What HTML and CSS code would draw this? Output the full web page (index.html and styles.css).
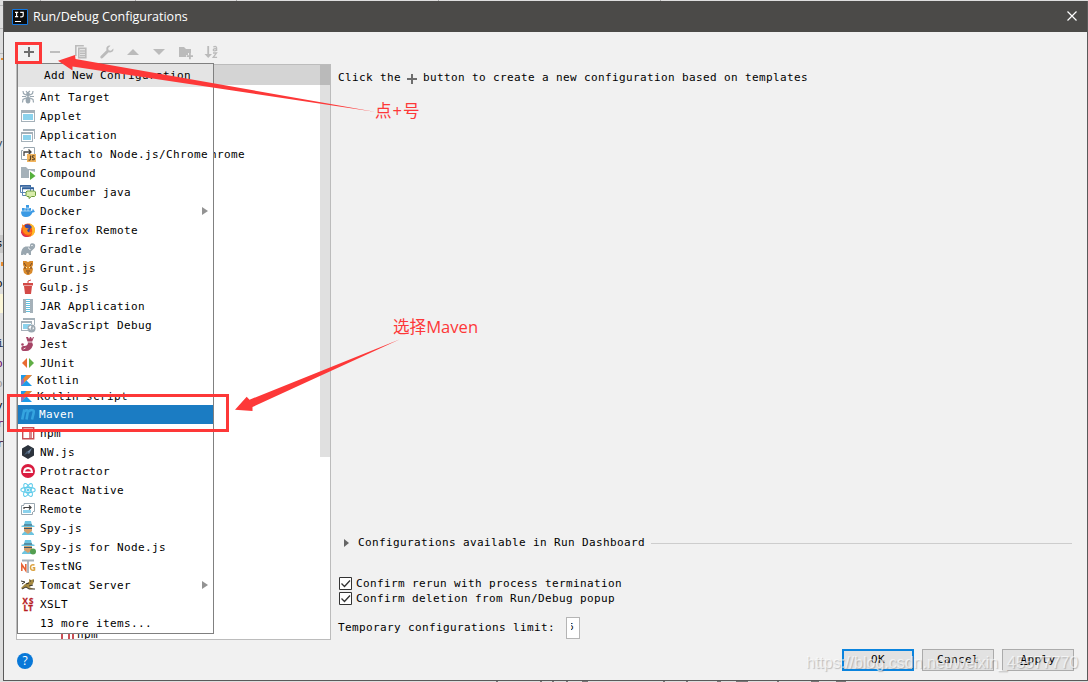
FILE: index.html
```html
<!DOCTYPE html>
<html lang="en">
<head>
<meta charset="utf-8">
<title>Run/Debug Configurations</title>
<link rel="stylesheet" href="styles.css">
</head>
<body>
<div class="screen">
  <!-- editor visible around the dialog -->
  <svg class="editor" width="1088" height="682" viewBox="0 0 1088 682">
    <path fill="#b9b9b9" d="M0 5h3v1H0zM0 28h3v1H0zM0 53h3v1H0z"/>
    <path fill="#a5a5a5" d="M40 0h1v1h-1zM135 0h1v1h-1zM236 0h1v1h-1zM438 0h1v1h-1zM660 0h1v1h-1z"/>
    <path fill="#c8c8c8" d="M0 235h3v18H0z"/>
    <path fill="#fbf6d8" d="M0 294h3v19H0z"/>
    <path fill="#777" d="M496 681h2v1h-2zM540 681h2v1h-2zM552 681h2v1h-2zM566 681h2v1h-2zM582 681h6v1h-6zM663 681h2v1h-2zM686 681h2v1h-2zM717 681h4v1h-4zM736 681h12v1h-12zM777 681h2v1h-2zM811 681h8v1h-8zM836 681h10v1h-10z"/>
    <g class="code">
      <text x="-4" y="147" fill="#345">y</text><text x="-4" y="247">s</text><text x="-4" y="287">o</text>
      <text x="-3" y="347" fill="#235">i</text><text x="-4" y="367" fill="#606">b</text><text x="-4" y="387" fill="#999">o</text>
      <text x="-4" y="409">y</text><text x="-3" y="427" fill="#606">r</text><text x="-3" y="447" fill="#303">r</text>
    </g>
    <path fill="#e78b2e" d="M1 262h2v4H1zM1 58h2v2H1z"/>
  </svg>

  <div class="dialog">
    <header class="titlebar">
      <svg width="16" height="16" viewBox="0 0 16 16"><path fill="#0b0b0b" stroke="#1478e0" d="M.5.5h15v15H.5z"/><path fill="none" stroke="#fff" stroke-width="1.2" d="M3 3.300h3.200M4.600 3.300v4.400M3 7.700h3.200M8.200 3.300h3v3.200q0 1.300-1.600 1.300H8.200M3 12.500h6"/></svg>
      <h1 class="title">Run/Debug Configurations</h1>
      <svg class="close" width="10" height="10" viewBox="0 0 10 10"><path stroke="#fff" stroke-width="1.2" d="m.5.5 9 9m0-9-9 9"/></svg>
    </header>

    <main class="content">
      <section class="left">
        <div class="toolbar">
          <svg viewBox="0 0 16 16"><path stroke="#6e6e6e" stroke-width="2" d="M3 8h10M8 3v10"/></svg>
          <svg viewBox="0 0 16 16"><path stroke="#bdbdbd" stroke-width="2" d="M3 8h10"/></svg>
          <svg viewBox="0 0 16 16"><path fill="none" stroke="#bbb" stroke-width="1.6" d="M2.800 12V1.800h8M5.800 4.400h7v9.400h-7zM7 7h5M7 9.300h5M7 11.600h5"/></svg>
          <svg viewBox="0 0 16 16"><path fill="#bbb" d="M14.300 4.500 12 6.800 9.600 6.200 9.200 4 11.500 1.700C9.600.9 7.200 2.300 7.300 4.900l.2 1.300L1.500 12.200q-.6 1.200.3 2t2-.1l5.900-5.900c3 .9 5.400-1.100 4.600-3.700Z"/></svg>
          <svg viewBox="0 0 16 16"><path fill="#bbb" d="M2 11 8 5l6 6z"/></svg>
          <svg viewBox="0 0 16 16"><path fill="#bbb" d="M2 5l6 6 6-6z"/></svg>
          <svg viewBox="0 0 16 16"><path fill="#bbb" d="M2 3h5l2 2h5v4h-3v2H9v2H2zM12 9h1.800v2.200H16V13h-2.200v2.200H12V13H9.700v-1.800H12z"/></svg>
          <svg viewBox="0 0 16 16"><path fill="#bbb" d="M4.300 2h1.800v8H9l-3.800 4L1.500 10h2.800z"/><path fill="none" stroke="#bbb" stroke-width="1.300" d="M10.300 2.800q3.300-.9 3.300 1v3.100m0-2.200q-3.300-.2-3.300 1.200c0 1.600 3 1 3.300-.4M10 9h3.500l-3.300 4.300h3.900"/></svg>
        </div>
        <div class="tree">
          <div class="tree-selected"></div>
          <span class="tree-chrome">Chrome</span>
          <span class="tree-npm"><svg width="13" height="13" viewBox="0 0 13 13"><path fill="#fff" stroke="#c94f55" stroke-width="2" d="M1 1h11v11H1zM8 4v8"/></svg>npm</span>
          <div class="scrollbar"></div>
        </div>
      </section>

      <section class="right">
        <p class="hint"><span>Click the</span><svg width="10" height="10" viewBox="0 0 10 10"><path stroke="#6e6e6e" stroke-width="2" d="M0 5h10M5 0v10"/></svg><span>button to create a new configuration based on templates</span></p>
        <div class="dashboard"><svg width="6" height="8" viewBox="0 0 6 8"><path fill="#666" d="M0 0v8l5-4z"/></svg><span>Configurations available in Run Dashboard</span><i></i></div>
        <div class="check"><svg width="13" height="13" viewBox="0 0 13 13"><path fill="#fff" stroke="#333" d="M.5.5h12v12H.5z"/><path fill="none" stroke="#333" stroke-width="1.300" d="m2.500 6.500 3 3 5.500-6"/></svg>Confirm rerun with process termination</div>
        <div class="check"><svg width="13" height="13" viewBox="0 0 13 13"><path fill="#fff" stroke="#333" d="M.5.5h12v12H.5z"/><path fill="none" stroke="#333" stroke-width="1.300" d="m2.500 6.500 3 3 5.500-6"/></svg>Confirm deletion from Run/Debug popup</div>
        <div class="limit">Temporary configurations limit:<span class="field"><span>5</span></span></div>
      </section>
    </main>

    <footer class="footer">
      <span class="help">?</span>
      <div class="buttons"><span class="button primary">OK</span><span class="button">Cancel</span><span class="button"><u>A</u>pply</span></div>
    </footer>
  </div>

  <div class="popup">
    <div class="popup-title">Add New Configuration</div>
    <div class="item"><svg viewBox="0 0 14 14"><path fill="none" stroke="#9aa7b0" stroke-width="1.200" d="M5 5 2.500 3.500 2 1M9 5l2.500-1.500L12 1M5 6.500H1M9 6.500h4M5 8l-3 1.500-.5 3M9 8l3 1.500.5 3M5 1l1.500 2L9 1"/><ellipse cx="7" cy="4.500" rx="2" ry="2.300" fill="#9aa7b0"/><ellipse cx="7" cy="10" rx="2.400" ry="3.500" fill="#9aa7b0"/></svg>Ant Target</div>
    <div class="item"><svg viewBox="0 0 14 14"><path fill="#a5b1b9" d="M0 1h14v12H0z"/><path fill="#fff" d="M1 4h12v8H1z"/><path fill="#8bd2ec" d="M2 5h10v6H2z"/></svg>Applet</div>
    <div class="item"><svg viewBox="0 0 14 14"><path fill="#a5b1b9" d="M2 1h12v10h-1V3H2zM0 4h12v10H0z"/><path fill="#fff" d="M1 6h10v7H1z"/><path fill="#8bd2ec" d="M2 7h8v5H2z"/></svg>Application</div>
    <div class="item"><svg viewBox="0 0 14 14"><path fill="none" stroke="#9aa7b0" d="M3 2V.5h10.500V7M2 3.500H.5v9H6"/><path fill="none" stroke="#444" stroke-width="1.300" d="M3 9V5h7M7.500 2.500 10 5 7.500 7.500"/><path fill="#f2b55e" d="M6 7h9v8H6z"/><path fill="none" stroke="#5c4526" stroke-width="1.100" d="M9.500 8.500v3.700q0 1.300-2 .8M13.500 8.900q-2.300-.5-2.300.9c0 1 2.300.7 2.300 2q0 1.500-2.600.8"/></svg>Attach to Node.js/Chrome</div>
    <div class="item"><svg viewBox="0 0 14 14"><path fill="#a5b1b9" d="M0 1h5l2 2h7v3L8 4v8H0z"/><path fill="#55b03c" d="M9 5.500 14.500 10 9 14z"/></svg>Compound</div>
    <div class="item"><svg class="wide" viewBox="0 0 16 14"><path fill="#fff" stroke="#5b86b5" d="M.5.500h10v7H.5zM2.500 2.500h11v8h-11z"/><path stroke="#315f9a" stroke-width="1.600" d="M0 1h11M2 3.500h12"/><path fill="#d9edac" stroke="#6d9c3c" d="M7 6h7.500l1 1v3.500l-1 1h-3L9 13.500v-2H7l-1-1V7z"/></svg>Cucumber java</div>
    <div class="item"><svg viewBox="0 0 14 14"><path fill="#3b9ae4" d="M5 1h3v3h2v3q2 0 1.700-2.300 1.300.8 1.300 2l1 .2q-.6 1.600-2.500 1.600-2 4.500-6.500 4.500Q0 13 0 7.500h1V4h4z"/><path stroke="#fff" stroke-width=".5" d="M1 7h9M4 4h5M4 4v3M7 4v3"/></svg>Docker<b></b></div>
    <div class="item"><svg viewBox="0 0 14 14"><circle cx="7" cy="7.200" r="6.800" fill="#f4511e"/><path fill="#ffbd27" d="M8 0q6 2 6 7t-5 6.500q3-3 2-7Q10 2 8 0"/><path fill="#3b4ba3" d="M4 2q4-2 7 2l-2 2-1 4-4-2z"/><path fill="#ff8c1a" d="m1 1 4 4 3 .5L6 7l1 2q2 1 4-.5-1 4-5 3Q1 11 1 1"/><path fill="#d72a58" d="M0 7q2 6 8 6.500-6 2-8-4z"/></svg>Firefox Remote</div>
    <div class="item"><svg viewBox="0 0 14 14"><path fill="#9aa7b0" d="M0 13q0-7.500 4.500-8.500l4.500 0q-.5-3 2-3.200Q14.200 1 14.200 4q0 2.500-2.700 4L10 9.500V13H8q0-2-1.500-2T5 13H3.500Q3 11.500 2 13z"/><path fill="none" stroke="#fff" stroke-width=".8" d="M10 3.700q1.800-.7 2.200.5M7.500 5.500q0 2 2 2"/></svg>Gradle</div>
    <div class="item"><svg viewBox="0 0 14 14"><path fill="#d98a2b" d="M2 0h3l2 1 2-1h3v4l-1 2 1 2-1 4-3 2H6l-3-2-1-4 1-2-1-2z"/><path fill="none" stroke="#68432c" stroke-width=".9" d="M3 2l2 3M11 2 9 5M3 7h2M9 7h2M5 10h4M6 12h2"/><path fill="#fff0b0" d="M5 6h1v1H5zM8 6h1v1H8z"/></svg>Grunt.js</div>
    <div class="item"><svg viewBox="0 0 14 14"><path fill="none" stroke="#d34a47" d="M7 4V1l3-1"/><path fill="#d34a47" d="M2 3h10v2.500H2zM3 6h8l-1 8H4z"/></svg>Gulp.js</div>
    <div class="item"><svg viewBox="0 0 14 14"><path fill="#a5b1b9" d="M2 0h3v14H2zM9 0h3v14H9z"/><path stroke="#62c1df" stroke-width="4" stroke-dasharray="1 1" d="M7 0v14"/></svg>JAR Application</div>
    <div class="item"><svg viewBox="0 0 14 14"><path fill="#a5b1b9" d="M2 0h12v7h-1V2H2zM0 3h11v3h-1V5H1v7h6v1H0z"/><path fill="#8bd2ec" d="M2 6h8v2L7 11H2z"/><circle cx="10.500" cy="10.500" r="4" fill="#9aa7b0"/><path fill="#fff" d="m7.500 9.500 2-2 1 1-1 2 1 2zM12 8l1 3-1.500.5z"/></svg>JavaScript Debug</div>
    <div class="item"><svg viewBox="0 0 14 14"><path fill="#a64566" d="M5 0h8l-2 5 1 3q-2 6-7 6H2Q-.5 13 .5 10q1-1.500 3-1 3 0 3.500-3z"/><path fill="#fff" d="m7 0 1 2 1-2zM10 0l1 2 1-2z"/><circle cx="1.500" cy="7.500" r="1.300" fill="#a64566"/><path stroke="#fff" stroke-width=".8" d="M6 5h5.500M2.500 12l2-1"/></svg>Jest</div>
    <div class="item"><svg viewBox="0 0 14 14"><path fill="#e96b31" d="M6 2v10L1 7z"/><path fill="#60ae45" d="M8 2v10l5-5z"/></svg>JUnit</div>
    <div class="item kotlin"><svg viewBox="0 0 11 11"><path fill="#1d9bea" d="M0 0h11L0 11z"/><path fill="#ef8432" d="M5.500 0H11L0 11V5.500z"/><path fill="#9b70b8" d="M0 6 3 3v5l-3 3z"/><path fill="#1d9bea" d="M5.500 5.500 11 11H0z"/></svg>Kotlin</div>
    <div class="item kotlin"><svg viewBox="0 0 11 11"><path fill="#1d9bea" d="M0 0h11L0 11z"/><path fill="#ef8432" d="M5.500 0H11L0 11V5.500z"/><path fill="#9b70b8" d="M0 6 3 3v5l-3 3z"/><path fill="#1d9bea" d="M5.500 5.500 11 11H0z"/></svg>Kotlin script</div>
    <div class="item selected"><svg viewBox="0 0 14 14"><path fill="none" stroke="#35a4df" stroke-width="2.600" d="M1.200 12.500 3.300 2.500M2.700 5q3-3 4.300-1L5.500 12.500M6.800 5q3-3 5.400-1.500 1 .5.300 3L11 12.500"/></svg>Maven</div>
    <div class="item"><svg viewBox="0 0 14 14"><path fill="#fff" stroke="#c94f55" stroke-width="1.400" d="M1.700 1.700h11v11h-11z"/><path fill="#d9868a" d="M8 4h3v8H8z"/></svg>npm</div>
    <div class="item"><svg viewBox="0 0 14 14"><path fill="#2c333c" d="m7 0 6 3.500v7L7 14l-6-3.500v-7z"/><path fill="#7890aa" d="m11 3-3 6-2-2z"/><path fill="#455b73" d="m3 10 3-4 2 2z"/></svg>NW.js</div>
    <div class="item"><svg viewBox="0 0 14 14"><circle cx="7" cy="7" r="7" fill="#d91c40"/><path fill="#fff" d="M2 9q0-6 5-6t5 6z"/><path fill="#d91c40" d="M4 7.500q.3-2.500 3-2.500t3 2.500z"/></svg>Protractor</div>
    <div class="item"><svg class="wide" viewBox="0 0 16 14"><g fill="none" stroke="#61cceb" stroke-width="1.100"><ellipse cx="8" cy="7" rx="7.200" ry="2.600"/><ellipse cx="8" cy="7" rx="7.200" ry="2.600" transform="rotate(60 8 7)"/><ellipse cx="8" cy="7" rx="7.200" ry="2.600" transform="rotate(120 8 7)"/></g><circle cx="8" cy="7" r="1.500" fill="#61cceb"/></svg>React Native</div>
    <div class="item"><svg viewBox="0 0 14 14"><path fill="none" stroke="#9aa7b0" d="M3 3V1.500h10.500v8H12M3 3.500H.5v9h11V10"/><path fill="#8bd2ec" d="M2 8h8v3H2z"/><path fill="none" stroke="#444" stroke-width="1.200" d="M3 7V5.500h7M8 3.500l2 2-2 2"/></svg>Remote</div>
    <div class="item"><svg viewBox="0 0 14 14"><path fill="#6cc4e0" d="M4 0h6l1 4 3 1-1 1H1L0 5l3-1zM1 13l3-3 3 2 3-2 3 3v1H1z"/><path fill="#d5a06b" d="M3 6h8v4l-4 3-4-3z"/><path stroke="#3e596a" d="M3 7.500h8M3 4h8"/></svg>Spy-js</div>
    <div class="item"><svg viewBox="0 0 14 14"><path fill="#6cc4e0" d="M4 0h6l1 4 3 1-1 1H1L0 5l3-1zM1 13l3-3 3 2 3-2 3 3v1H1z"/><path fill="#d5a06b" d="M3 6h8v4l-4 3-4-3z"/><path stroke="#3e596a" d="M3 7.500h8M3 4h8"/><circle cx="12" cy="11.500" r="3" fill="#539e50"/></svg>Spy-js for Node.js</div>
    <div class="item"><svg viewBox="0 0 14 14"><path stroke="#a5b1b9" stroke-width="1.800" d="M1 1.500h12M7 2v12"/><path fill="none" stroke="#e65f30" stroke-width="1.500" d="M.8 12V5.500l4 6V5"/><path fill="none" stroke="#dba13e" stroke-width="1.500" d="M13.500 6Q9.500 5 9.500 8.500t4 2.500V8.700h-1.800"/></svg>TestNG</div>
    <div class="item"><svg viewBox="0 0 14 14"><path fill="#a68b42" d="m8 1 2 1 3-1-.5 4L10 8l-2 1 5 2H8L5 9l-4 2-1-1 4-4 4-2z"/><path fill="none" stroke="#38352c" d="m0 3 4 1-3 2M1 11l4-2 3 2h6M5 6l3-1M8 8l4-1M9 3h1M12 3h1"/></svg>Tomcat Server<b></b></div>
    <div class="item"><svg class="xslt" viewBox="0 0 14 14"><text x="1.500" y="6.500" textLength="11">XS</text><text x="2.500" y="14" textLength="9.500">LT</text></svg>XSLT</div>
    <div class="item more">13 more items...</div>
  </div>

  <!-- annotations drawn above the dialog -->
  <svg class="marks" width="1088" height="682" viewBox="0 0 1088 682">
    <path fill="none" stroke="#fd3838" stroke-width="3" d="M16.500 43.500h24v19h-24zM8.500 395.500h219v35h-219z"/>
    <path fill="#fd3838" d="M58 60.700 75 55l.5 4L376 112 72.500 66.500v4zM235 409.700 246.700 396.700l2.800 3L400 339.300 252.500 407v4z"/>
  </svg>
  <span class="note note-plus">点+号</span>
  <span class="note note-maven">选择Maven</span>
  <span class="watermark">https://blog.csdn.net/weixin_45577770</span>
</div>
</body>
</html>
```
FILE: styles.css
```css
* { box-sizing: border-box; }
body { margin: 0; }
svg { display: block; flex: none; overflow: visible; }
.screen {
  position: relative;
  width: 1088px;
  height: 682px;
  overflow: hidden;
  background: #dedede;
  color: #000;
  font: 11px/16px "DejaVu Sans Mono", monospace;
  letter-spacing: .378px;
  white-space: nowrap;
}
.editor, .marks { position: absolute; left: 0; top: 0; }
.code { font: 11px "DejaVu Sans Mono", monospace; }
.dialog {
  position: absolute;
  left: 3px;
  top: 1px;
  width: 1085px;
  height: 680px;
  display: flex;
  flex-direction: column;
  background: #f1f1f1;
  border: 1px solid #5a5a5a;
  border-top: 0;
}
.titlebar {
  height: 31px;
  display: flex;
  align-items: center;
  padding: 0 10px 0 8px;
  background: #4b4a48;
  color: #fff;
}
.title {
  flex: 1;
  margin: 0 0 0 5px;
  font: 12.5px/18px "Open Sans", sans-serif;
  letter-spacing: 0;
}
.close { margin-top: -1px; }
.content { display: flex; height: 607px; padding-left: 12px; }
.left { width: 315px; }
.toolbar { display: flex; gap: 10px; height: 32px; padding: 12px 0 0 5px; }
.toolbar svg { width: 16px; height: 16px; }
.tree {
  position: relative;
  height: 576px;
  background: #fff;
  border: 1px solid #bcbcbc;
  overflow: hidden;
}
.tree-selected { height: 20px; background: #d4d4d4; }
.tree-chrome { position: absolute; left: 186px; top: 82px; }
.tree-npm { position: absolute; left: 44px; top: 562px; display: flex; gap: 3px; align-items: center; }
.scrollbar {
  position: absolute;
  right: 0;
  top: 0;
  width: 10px;
  height: 392px;
  background: rgba(0, 0, 0, .12);
}
.right { flex: 1; padding: 38px 15px 0 7px; }
.hint { display: flex; align-items: center; margin: 0 0 448px; height: 16px; }
.hint svg { margin: 1px 6px 0; }
.dashboard { display: flex; align-items: center; height: 17px; margin-bottom: 25px; }
.dashboard svg { margin: 1px 8px 0 6px; }
.dashboard i { flex: 1; height: 1px; margin: 2px 0 0 6px; background: #cdcdcd; }
.check { display: flex; align-items: center; gap: 4px; height: 15px; padding-left: 1px; }
.check svg { margin-top: -1px; }
.limit { display: flex; align-items: center; height: 22px; margin-top: 11px; }
.field {
  display: flex;
  width: 14px;
  height: 22px;
  margin-left: 11px;
  padding: 1px 4px 0;
  background: #fff;
  border: 1px solid #b5b5b5;
}
.field span { width: 3px; overflow: hidden; direction: rtl; font-size: 9px; }
.footer { display: flex; justify-content: space-between; padding: 10px 13px 0 13px; }
.help {
  width: 16px;
  height: 16px;
  margin-top: 4px;
  border-radius: 50%;
  background: #0878d8;
  color: #fff;
  font: 12px/16px "Open Sans", sans-serif;
  letter-spacing: 0;
  text-align: center;
}
.buttons { display: flex; gap: 8px; }
.button {
  width: 72px;
  height: 22px;
  border: 1px solid #ababab;
  background: #e2e2e2;
  line-height: 19px;
  text-align: center;
}
.button.primary { border: 2px solid #0b84de; line-height: 17px; }
.popup {
  position: absolute;
  left: 17px;
  top: 63px;
  width: 197px;
  height: 571px;
  background: #fff;
  border: 1px solid #808080;
}
.popup-title { height: 23px; margin-bottom: 1px; padding-left: 26px; background: #e4e4e4; line-height: 23px; }
.item { display: flex; align-items: center; height: 19px; padding: 0 5px 0 3px; gap: 5px; }
.item svg { width: 14px; height: 14px; margin-top: -1px; }
.item svg.wide { width: 16px; margin: -1px -1px 0; }
.item b {
  margin: -1px 0 0 auto;
  border: solid transparent;
  border-width: 4px 0 4px 6px;
  border-left-color: #939393;
}
.item.kotlin { height: 16px; line-height: 14px; padding-bottom: 1px; }
.item.kotlin svg { width: 11px; height: 11px; margin-top: 0; }
.item.selected { background: #1b7cc3; color: #fff; gap: 4px; }
.item.more { padding-left: 22px; }
.xslt { font: bold 8px "Open Sans", sans-serif; letter-spacing: 0; fill: #b71c24; stroke: #b71c24; stroke-width: .3px; }
.note {
  position: absolute;
  color: #fd3838;
  font: 16.6px/22px "Open Sans", "Noto Sans CJK SC", sans-serif;
  letter-spacing: 0;
}
.note-plus { left: 375px; top: 100px; letter-spacing: 1px; }
.note-maven { left: 393px; top: 316px; }
.watermark {
  position: absolute;
  left: 806px;
  top: 652px;
  color: rgba(255, 255, 255, .65);
  font: 16px/22px "Liberation Sans", sans-serif;
  letter-spacing: 0;
  text-shadow: 1px 1px 1px rgba(90, 90, 90, .35);
}
```
